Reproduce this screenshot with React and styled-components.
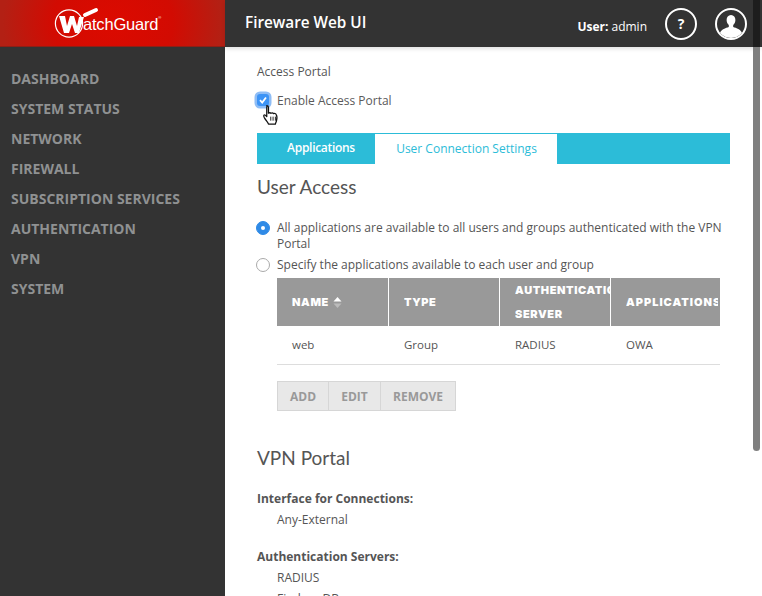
import React from 'react';
import styled, { createGlobalStyle } from 'styled-components';

const Global = createGlobalStyle`
  html, body { margin: 0; padding: 0; height: 100%; overflow: hidden; background: #fff; }
  #root { height: 596px; }
  * { box-sizing: border-box; }
`;
const Page = styled.div`
  position: relative; width: 762px; height: 596px; overflow: hidden;
  display: grid; grid-template-columns: 225px 1fr; grid-template-rows: 47px 1fr;
  font-family: "Open Sans", sans-serif; color: #555; font-size: 12px;
`;
const Brand = styled.div`
  display: flex; align-items: center; padding: 0 0 0 54px;
  background: radial-gradient(ellipse 110px 90px at 50% 50%, #dc0a00 0%, #d20b02 55%, #b32014 100%);
  color: #fff; border-bottom: 1px solid #8d1f16;
`;
const BrandMark = styled.svg` width: 31px; height: 31px; margin-right: -2px; flex: none; overflow: visible; `;
const BrandName = styled.span`
  font-family: "Liberation Sans", sans-serif; font-size: 16.5px; letter-spacing: -0.2px; margin-top: 3px; line-height: 1; white-space: nowrap;
  sup { font-size: 4px; vertical-align: top; line-height: 1; }
`;
const TopBar = styled.header`
  display: flex; align-items: center; background: #333; color: #fff; padding: 0 15px 0 20px;
  box-shadow: 0 2px 4px rgba(0,0,0,.12); z-index: 1;
`;
const Product = styled.div` font-size: 15.3px; font-weight: 600; margin-top: -4px; flex: 1; `;
const UserLabel = styled.div` font-size: 12px; margin-right: 18px; margin-top: 5px; b { font-weight: 700; } `;
const RoundIcon = styled.div`
  width: 32px; height: 32px; border: 2px solid #fff; border-radius: 50%; margin-left: ${p => p.$gap || 0}px;
  display: flex; align-items: center; justify-content: center; font-weight: 700; font-size: 14px; overflow: hidden;
  svg { width: 28px; height: 28px; display: block; }
`;
const Sidebar = styled.nav`
  background: #333; padding: 17px 11px 0; display: flex; flex-direction: column;
`;
const NavItem = styled.div`
  height: 30px; line-height: 30px; font-size: 14px; font-weight: 700; color: #8f9192; white-space: nowrap;
`;
const Main = styled.main` padding: 17px 32px 0; overflow: hidden; `;
const Crumb = styled.div` font-size: 12px; line-height: 16px; color: #555; `;
const CheckRow = styled.div` display: flex; align-items: center; margin-top: 12px; height: 16px; position: relative; margin-bottom: 25px; `;
const Check = styled.span`
  width: 12px; height: 12px; border-radius: 3px; background: #3d94f6; box-shadow: 0 0 0 2.5px #8fbdf5;
  display: flex; align-items: center; justify-content: center; flex: none;
  svg { width: 10px; height: 10px; }
`;
const CheckLabel = styled.span` margin-left: 8px; font-size: 12px; color: #5a5a5a; `;
const Hand = styled.svg` position: absolute; left: 5px; top: 12px; width: 21px; height: 23px; `;
const Tabs = styled.div` display: flex; height: 31px; background: #2cbcd8; `;
const Tab = styled.div`
  height: ${p => p.$active ? 30 : 31}px; display: flex; align-items: center; justify-content: center;
  font-size: 12px; letter-spacing: ${p => p.$active ? -0.3 : 0}px;
  width: ${p => p.$w}px; color: ${p => p.$active ? '#fff' : '#2cbcd8'};
  font-weight: ${p => p.$active ? 600 : 400}; background: ${p => p.$active ? '#2cbcd8' : '#fff'};
  padding: 0 0 1px ${p => p.$active ? 10 : 1}px; border-top: ${p => p.$active ? 0 : '1px solid #2cbcd8'};
`;
const SectionTitle = styled.h2`
  margin: ${p => p.$top}px 0 0; font-family: Lato, "Open Sans", sans-serif; font-weight: 400; font-size: 19px; line-height: 24px; color: #555;
`;
const RadioRow = styled.div` display: flex; align-items: flex-start; margin-top: ${p => p.$top}px; line-height: 16px; font-size: 12px; width: 473px; `;
const Radio = styled.span`
  flex: none; width: 14px; height: 14px; border-radius: 50%; margin: 1px 7px 0 -1px;
  background: ${p => p.$on ? '#2f8ae6' : '#fff'}; border: 1px solid ${p => p.$on ? '#2f8ae6' : '#aaa'};
  display: flex; align-items: center; justify-content: center;
  &::after { content: ''; width: 4px; height: 4px; border-radius: 50%; background: ${p => p.$on ? '#fff' : 'transparent'}; }
`;
const TableWrap = styled.div` margin: 5px 10px 0 20px; overflow: hidden; `;
const Head = styled.div` display: grid; grid-template-columns: 112px 111px 111px 109px; height: 48px; background: #999; `;
const Th = styled.div`
  border-right: ${p => p.$last ? 0 : '1px solid #fff'}; padding: 0 ${p => p.$last ? 2 : 0}px 0 15px; color: #fff;
  font-family: Inter, sans-serif; font-weight: 900; font-size: 11px; letter-spacing: ${p => p.$last ? 1 : 0.6}px;
  display: flex; align-items: center; white-space: nowrap; overflow: hidden; line-height: 24px;
  svg { margin-left: 4px; width: 9px; height: 11px; flex: none; }
`;
const ThClip = styled.div` overflow: hidden; display: flex; align-items: center; `;
const ThStack = styled.div` display: block; `;
const Row = styled.div`
  display: grid; grid-template-columns: 112px 111px 111px 109px; height: 39px; align-items: center; border-bottom: 1px solid #ddd;
  font-size: 11.5px; color: #555; padding-bottom: 2px;
`;
const Td = styled.div` padding-left: 15px; `;
const Buttons = styled.div` display: flex; margin: 16px 0 0 20px; `;
const Btn = styled.div`
  height: 30px; width: ${p => p.$w}px; background: #e8e8e8; border: 1px solid #d6d6d6; margin-left: ${p => p.$first ? 0 : -1}px;
  font-size: 12px; font-weight: 700; color: #999; display: flex; align-items: center; justify-content: center;
`;
const Label = styled.div` font-weight: 700; font-size: 12px; line-height: 16px; color: #555; margin-top: ${p => p.$top}px; `;
const Value = styled.div` font-size: 12px; line-height: 16px; margin: ${p => p.$top}px 0 0 20px; color: #555; `;
const ScrollThumb = styled.div`
  position: absolute; right: 2px; top: -10px; width: 7px; height: 461px; border-radius: 4px; background: #7f7f7f; z-index: 3;
  &::before { content: ''; position: absolute; left: 0; right: 0; top: 0; height: 57px; background: #1d1d1d; border-radius: 4px 4px 0 0; }
`;

const nav = ['DASHBOARD','SYSTEM STATUS','NETWORK','FIREWALL','SUBSCRIPTION SERVICES','AUTHENTICATION','VPN','SYSTEM'];

export default function App() {
  return (
    <Page>
      <Global />
      <Brand>
        <BrandMark viewBox="0 0 31 31">
          <circle cx="15" cy="15.500" r="13.600" fill="none" stroke="#fff" strokeWidth="1.200" />
          <path d="M5 8h6l2 10 3-10h4l3 10 2-9h5l-5 16h-4l-3-9-3 9h-5z" fill="#fff" />
          <path d="M31 7l11-5" stroke="#fff" strokeWidth="4" strokeLinecap="round" />
        </BrandMark>
        <BrandName>atchGuard<sup>®</sup></BrandName>
      </Brand>
      <TopBar>
        <Product>Fireware Web UI</Product>
        <UserLabel><b>User:</b> admin</UserLabel>
        <RoundIcon>?</RoundIcon>
        <RoundIcon $gap={18}>
          <svg viewBox="0 0 28 28"><path d="M14 5c2.800 0 4.400 2.200 4.400 5 0 2.200-1 4-2.200 5v2c3 1 7.800 2.500 8.800 6-2.500 3-6.500 5-11 5s-8.500-2-11-5c1-3.500 5.800-5 8.800-6v-2c-1.200-1-2.200-2.800-2.200-5 0-2.800 1.600-5 4.400-5z" fill="#fff" /></svg>
        </RoundIcon>
      </TopBar>
      <Sidebar>
        {nav.map(n => <NavItem key={n}>{n}</NavItem>)}
      </Sidebar>
      <Main>
        <Crumb>Access Portal</Crumb>
        <CheckRow>
          <Check><svg viewBox="0 0 10 10"><path d="M2 5.200l2.200 2.300L8 2.500" fill="none" stroke="#fff" strokeWidth="1.800" /></svg></Check>
          <CheckLabel>Enable Access Portal</CheckLabel>
          <Hand viewBox="0 0 18 20">
            <path d="M4 1.500c1 0 1.500.6 1.500 1.500v5c.8-.5 1.600-.5 2.200.1.800-.5 1.700-.4 2.200.3.800-.4 1.900-.2 2.300.8.800 1 .8 3.200.3 5.300-.3 1.300-.8 2-1 3H5.500c-.4-1.500-2-3-3.500-5.500-.5-1-1-1.800-.5-2.300.6-.5 1.300 0 2.500 1.300V3c0-1 .5-1.500 0-1.500z" fill="#fff" stroke="#111" strokeWidth="1.100" strokeLinejoin="round" />
            <path d="M7.500 11v3.500M9.500 11v3.500M11.500 11v3.500" stroke="#111" strokeWidth=".8" />
          </Hand>
        </CheckRow>
        <Tabs>
          <Tab $active $w={118}>Applications</Tab>
          <Tab $w={182}>User Connection Settings</Tab>
        </Tabs>
        <SectionTitle $top={11}>User Access</SectionTitle>
        <RadioRow $top={21}><Radio $on />All applications are available to all users and groups authenticated with the VPN Portal</RadioRow>
        <RadioRow $top={5}><Radio />Specify the applications available to each user and group</RadioRow>
        <TableWrap>
          <Head>
            <Th>NAME<svg viewBox="0 0 9 11"><path d="M4.500 0L8.500 4.500H.5z" fill="#fff" /><path d="M4.500 11L8.500 6.500H.5z" fill="#bbb" /></svg></Th>
            <Th><ThClip>TYPE</ThClip></Th>
            <Th><ThClip><ThStack>AUTHENTICATION<br />SERVER</ThStack></ThClip></Th>
            <Th $last><ThClip>APPLICATIONS</ThClip></Th>
          </Head>
          <Row><Td>web</Td><Td>Group</Td><Td>RADIUS</Td><Td>OWA</Td></Row>
        </TableWrap>
        <Buttons>
          <Btn $first $w={52}>ADD</Btn>
          <Btn $w={53}>EDIT</Btn>
          <Btn $w={76}>REMOVE</Btn>
        </Buttons>
        <SectionTitle $top={35}>VPN Portal</SectionTitle>
        <Label $top={21}>Interface for Connections:</Label>
        <Value $top={5}>Any-External</Value>
        <Label $top={21}>Authentication Servers:</Label>
        <Value $top={5}>RADIUS</Value>
        <Value $top={5}>Firebox-DB</Value>
      </Main>
      <ScrollThumb />
    </Page>
  );
}
